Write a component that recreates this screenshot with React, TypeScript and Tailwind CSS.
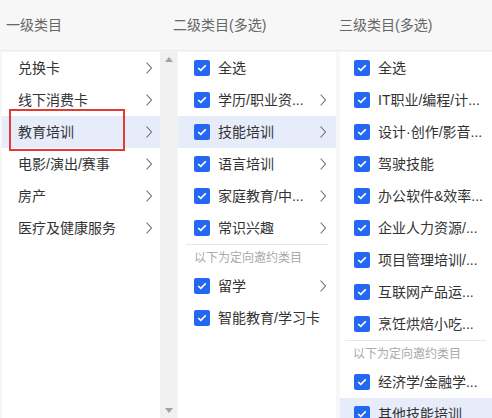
import type { ReactNode } from "react";

const FONT = { fontFamily: '"Liberation Sans", "Noto Sans CJK SC", sans-serif' };

function Chevron() {
  return (
    <svg width="8" height="14" viewBox="0 0 8 14" className="shrink-0">
      <path d="M1.5 1.5 L6.5 7 L1.5 12.5" fill="none" stroke="#6b6b6b" strokeWidth="1.1" />
    </svg>
  );
}

function Check() {
  return (
    <span className="w-4 h-4 shrink-0 rounded-[2px] bg-[#2468f2] flex items-center justify-center">
      <svg width="10" height="8" viewBox="0 0 10 8">
        <path d="M1.2 4 L3.8 6.4 L8.8 1.4" fill="none" stroke="#fff" strokeWidth="1.6" />
      </svg>
    </span>
  );
}

function Row({ label, active, arrow, check, pad }: { label: string; active?: boolean; arrow?: boolean; check?: boolean; pad: string }) {
  return (
    <div className={`h-8 flex items-center ${pad} ${active ? "bg-[#e7ecfb]" : ""}`}>
      {check && <Check />}
      <span className={`flex-1 min-w-0 whitespace-nowrap overflow-hidden text-[14px] text-[#333] ${check ? "ml-2" : ""}`}>{label}</span>
      {arrow && <Chevron />}
    </div>
  );
}

function Divider({ children, line, text }: { children: ReactNode; line: string; text: string }) {
  return (
    <div>
      <div className={`h-px bg-[#e8e8e8] ${line}`} />
      <div className={`h-[25px] flex items-center text-[12px] text-[#aaa] ${text}`}>{children}</div>
    </div>
  );
}

function Scrollbar() {
  return (
    <div className="w-[17px] shrink-0 bg-[#f0f0f0] flex flex-col justify-between items-center py-[5px]">
      <svg width="8" height="5" viewBox="0 0 8 5"><path d="M0 5 L4 0 L8 5 Z" fill="#a3a3a3" /></svg>
      <svg width="8" height="5" viewBox="0 0 8 5"><path d="M0 0 L4 5 L8 0 Z" fill="#a3a3a3" /></svg>
    </div>
  );
}

const level1 = ["兑换卡", "线下消费卡", "教育培训", "电影/演出/赛事", "房产", "医疗及健康服务"];
const level2 = [
  { t: "全选" },
  { t: "学历/职业资...", a: true },
  { t: "技能培训", a: true, on: true },
  { t: "语言培训", a: true },
  { t: "家庭教育/中...", a: true },
  { t: "常识兴趣", a: true },
];
const level3 = [
  "全选",
  "IT职业/编程/计...",
  "设计·创作/影音...",
  "驾驶技能",
  "办公软件&效率...",
  "企业人力资源/...",
  "项目管理培训/...",
  "互联网产品运...",
  "烹饪烘焙小吃...",
];

export default function App() {
  return (
    <div className="w-[492px] h-[418px] overflow-hidden bg-[#f7f7f7] flex flex-col" style={FONT}>
      <div className="h-[51px] shrink-0 flex items-center text-[14px] text-[#666] border-b border-[#ebebeb]">
        <div className="w-[173px] shrink-0 pl-[6px]">一级类目</div>
        <div className="w-[166px] shrink-0">二级类目(多选)</div>
        <div className="flex-1 min-w-0">三级类目(多选)</div>
      </div>
      <div className="flex-1 flex min-h-0 pt-px pl-[2px]">
        <div className="w-[158px] shrink-0 bg-white">
          {level1.map((t) => (
            <div key={t} className="relative">
              <Row label={t} arrow active={t === "教育培训"} pad="pl-4 pr-[7px]" />
              {t === "教育培训" && (
                <div className="absolute left-[7px] top-[-7px] w-[116px] h-[42px] border-2 border-[#e53935] pointer-events-none" />
              )}
            </div>
          ))}
        </div>
        <Scrollbar />
        <div className="w-[158px] shrink-0 ml-px bg-white">
          {level2.map((r) => (
            <Row key={r.t} label={r.t} arrow={r.a} active={r.on} check pad="pl-4 pr-[9px]" />
          ))}
          <Divider line="mx-2" text="pl-4">以下为定向邀约类目</Divider>
          <Row label="留学" arrow check pad="pl-4 pr-[9px]" />
          <Row label="智能教育/学习卡" check pad="pl-4 pr-[9px]" />
        </div>
        <div className="flex-1 min-w-0 ml-[4px] bg-white">
          {level3.map((t) => (
            <Row key={t} label={t} check pad="pl-[14px] pr-[6px]" />
          ))}
          <Divider line="ml-[5px] mr-[6px]" text="pl-[13px]">以下为定向邀约类目</Divider>
          <Row label="经济学/金融学..." check pad="pl-[14px] pr-[6px]" />
          <Row label="其他技能培训" check active pad="pl-[14px] pr-[6px]" />
        </div>
      </div>
    </div>
  );
}
